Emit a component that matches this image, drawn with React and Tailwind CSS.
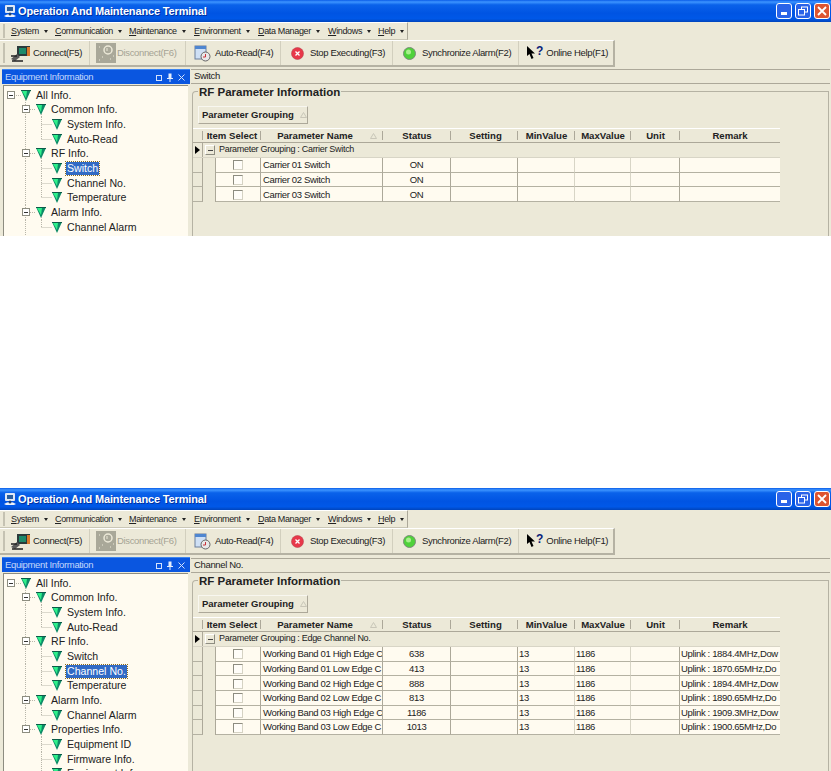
import React from "react";

const MENUS = [
  { first: "S", rest: "ystem", w: "w-[44px]" },
  { first: "C", rest: "ommunication", w: "w-[74px]" },
  { first: "M", rest: "aintenance", w: "w-[65px]" },
  { first: "E", rest: "nvironment", w: "w-[64px]" },
  { first: "D", rest: "ata Manager", w: "w-[70px]" },
  { first: "W", rest: "indows", w: "w-[50px]" },
  { first: "H", rest: "elp", w: "w-[30px]" },
];

const TOOLS = [
  { label: "Connect(F5)", icon: "connect", w: "w-[85px]", gap: "gap-[2px]", pl: "pl-[5px]" },
  { label: "Disconnect(F6)", icon: "disconnect", w: "w-[96px]", gap: "gap-[1px]", pl: "pl-[6px]", off: true },
  { label: "Auto-Read(F4)", icon: "auto", w: "w-[95px]", gap: "gap-[4px]", pl: "pl-[8px]" },
  { label: "Stop Executing(F3)", icon: "stop", w: "w-[112px]", gap: "gap-[6px]", pl: "pl-[10px]" },
  { label: "Synchronize Alarm(F2)", icon: "sync", w: "w-[126px]", gap: "gap-[6px]", pl: "pl-[10px]" },
  { label: "Online Help(F1)", icon: "help", w: "w-[94px]", gap: "gap-[3px]", pl: "pl-[8px]", last: true },
];

const TREE = [
  { level: 0, label: "All Info." },
  { level: 1, label: "Common Info." },
  { level: 2, label: "System Info." },
  { level: 2, label: "Auto-Read", end: true },
  { level: 1, label: "RF Info." },
  { level: 2, label: "Switch" },
  { level: 2, label: "Channel No." },
  { level: 2, label: "Temperature", end: true },
  { level: 1, label: "Alarm Info." },
  { level: 2, label: "Channel Alarm", end: true },
  { level: 1, label: "Properties Info.", last: true },
  { level: 2, label: "Equipment ID", noTrunk: true },
  { level: 2, label: "Firmware Info.", noTrunk: true },
  { level: 2, label: "Equipment Info.", noTrunk: true },
];

const COLS = [
  { title: "Item Select", w: "w-[58px]" },
  { title: "Parameter Name", w: "w-[122px] pr-[14px]", sort: true },
  { title: "Status", w: "w-[68px]" },
  { title: "Setting", w: "w-[67px] pl-[2px]" },
  { title: "MinValue", w: "w-[57px]" },
  { title: "MaxValue", w: "w-[56px]" },
  { title: "Unit", w: "w-[49px]" },
  { title: "Remark", w: "w-[100px]" },
];

const SWITCH_ROWS = [
  ["Carrier 01 Switch", "ON", "", "", ""],
  ["Carrier 02 Switch", "ON", "", "", ""],
  ["Carrier 03 Switch", "ON", "", "", ""],
];

const CHANNEL_ROWS = [
  ["Working Band 01 High Edge C", "638", "13", "1186", "Uplink : 1884.4MHz,Dow"],
  ["Working Band 01 Low Edge C", "413", "13", "1186", "Uplink : 1870.65MHz,Do"],
  ["Working Band 02 High Edge C", "888", "13", "1186", "Uplink : 1894.4MHz,Dow"],
  ["Working Band 02 Low Edge C", "813", "13", "1186", "Uplink : 1890.65MHz,Do"],
  ["Working Band 03 High Edge C", "1186", "13", "1186", "Uplink : 1909.3MHz,Dow"],
  ["Working Band 03 Low Edge C", "1013", "13", "1186", "Uplink : 1900.65MHz,Do"],
];

function ToolIcon({ name }) {
  if (name === "connect") {
    return (
      <svg width="21" height="17" viewBox="0 0 21 17" className="shrink-0">
        <rect x="7" y="1" width="13" height="10" fill="#2b3a3a" />
        <rect x="9" y="3" width="7" height="6" fill="#1d8a6a" />
        <rect x="17" y="2" width="3" height="9" fill="#d9792b" />
        <path d="M1 14 L7 9 L10 12 L5 16 Z" fill="#5a5a5a" />
        <path d="M1 11 H7 M2 16 H13" stroke="#222" strokeWidth="1.5" />
      </svg>
    );
  }
  if (name === "disconnect") {
    return (
      <svg width="20" height="20" viewBox="0 0 20 20" className="shrink-0">
        <rect width="20" height="20" fill="#a9a899" />
        <circle cx="12" cy="7" r="4" fill="none" stroke="#ece9d8" strokeWidth="1.5" />
        <path d="M11 5 V8" stroke="#ece9d8" />
        <path d="M3 4 h1 M6 14 h1 M3 17 h1 M14 16 h1 M17 13 h1" stroke="#ece9d8" />
      </svg>
    );
  }
  if (name === "auto") {
    return (
      <svg width="17" height="17" viewBox="0 0 17 17" className="shrink-0">
        <rect x="1" y="1" width="11" height="13" fill="#cfe0f5" stroke="#6b7f9a" />
        <rect x="1" y="1" width="11" height="3" fill="#4f86d0" />
        <circle cx="11.5" cy="11.5" r="4.5" fill="#e8e8e8" stroke="#666" />
        <path d="M11.5 9 V12 H9" stroke="#c8323a" fill="none" />
      </svg>
    );
  }
  if (name === "stop") {
    return (
      <svg width="13" height="13" viewBox="0 0 13 13" className="shrink-0">
        <circle cx="6.5" cy="6.5" r="6" fill="#e8384a" stroke="#b9434e" strokeWidth="0.6" />
        <path d="M4.5 4.5 L8.5 8.5 M8.5 4.5 L4.5 8.5" stroke="#fff" strokeWidth="1.3" />
      </svg>
    );
  }
  if (name === "sync") {
    return (
      <svg width="13" height="13" viewBox="0 0 13 13" className="shrink-0">
        <circle cx="6.5" cy="6.5" r="6" fill="#4fd13a" stroke="#7d8a7a" />
        <circle cx="5.5" cy="5" r="2.5" fill="#a8f08c" />
      </svg>
    );
  }
  return (
    <span className="flex items-start shrink-0">
      <svg width="9" height="14" viewBox="0 0 9 14" className="shrink-0">
        <path d="M0 0 L0 10 L2.5 8 L4.5 13 L6.5 12 L4.5 7.5 L8 7.5 Z" fill="#000" />
      </svg>
      <span className="text-[12px] leading-[11px] font-bold text-[#0a1f7a]">?</span>
    </span>
  );
}

function Toolbar() {
  return (
    <div className="flex h-[27px] w-[615px] bg-[#ece9d8] border-t border-white border-b-2 border-b-[#b5b2a3] border-r-2 border-r-[#b5b2a3]">
      <div className="w-[3px] shrink-0" />
      <div className="w-[2px] shrink-0 my-[2px] bg-[#c5c2b2]" />
      {TOOLS.map((t) => (
        <div
          key={t.label}
          className={`flex items-center shrink-0 ${t.w} ${t.gap} ${t.pl} ${t.last ? "" : "border-r border-[#d2cfbe]"}`}
        >
          <ToolIcon name={t.icon} />
          <span className={`whitespace-nowrap pt-[1px] text-[9.5px] tracking-[-0.35px] ${t.off ? "text-[#a5a394]" : "text-[#222]"}`}>{t.label}</span>
        </div>
      ))}
    </div>
  );
}

function MenuBar() {
  return (
    <div className="flex items-center h-[18px] w-[408px] border-t border-white border-b border-b-[#c9c6b5] border-r border-r-[#aca899]">
      <div className="w-[3px] shrink-0" />
      <div className="w-[2px] h-[14px] shrink-0 bg-[#c5c2b2]" />
      <div className="w-[6px] shrink-0" />
      {MENUS.map((m) => (
        <div key={m.first} className={`flex items-center shrink-0 pt-[1px] ${m.w} text-[9px] tracking-[-0.35px] text-[#222]`}>
          <span className="whitespace-nowrap">
            <span className="underline">{m.first}</span>
            {m.rest}
          </span>
          <span className="ml-[5px] w-0 h-0 border-x-[2.5px] border-x-transparent border-t-[3px] border-t-[#222]" />
        </div>
      ))}
    </div>
  );
}

function TitleBar() {
  return (
    <div className="flex items-center h-[22px] pl-[3px] pr-[1px] bg-[linear-gradient(180deg,#0a5ce8_0%,#3d95ff_9%,#0a62ea_22%,#0054e3_60%,#0058e8_85%,#0044bb_100%)]">
      <svg width="14" height="14" viewBox="0 0 14 14" className="shrink-0">
        <rect x="2" y="1" width="10" height="8" rx="1" fill="#dfe8f5" />
        <rect x="4" y="3" width="6" height="4" fill="#2a5f9e" />
        <path d="M1 12 Q7 8 13 12 L11 13 H3 Z" fill="#eef2f8" />
        <circle cx="7" cy="10" r="1.5" fill="#1d3f70" />
      </svg>
      <span className="ml-[1px] text-[11px] tracking-[-0.15px] font-bold text-white whitespace-nowrap [text-shadow:1px_1px_0_#0030a0]">
        Operation And Maintenance Terminal
      </span>
      <div className="ml-auto flex gap-[3px]">
        <div className="flex items-end pl-[4px] pb-[3px] w-[16px] h-[16px] rounded-[3px] border border-white bg-[#2a63e8]">
          <div className="w-[6px] h-[3px] bg-white" />
        </div>
        <div className="flex items-center justify-center w-[16px] h-[16px] rounded-[3px] border border-white bg-[#2a63e8]">
          <svg width="10" height="10" viewBox="0 0 10 10">
            <rect x="3.5" y="1" width="6" height="5" fill="none" stroke="#fff" />
            <rect x="0.5" y="3.5" width="6" height="5.5" fill="#2a63e8" stroke="#fff" />
          </svg>
        </div>
        <div className="flex items-center justify-center w-[16px] h-[16px] rounded-[3px] border border-white bg-[#dd5430]">
          <svg width="10" height="10" viewBox="0 0 10 10">
            <path d="M1 1 L9 9 M9 1 L1 9" stroke="#fff" strokeWidth="1.8" />
          </svg>
        </div>
      </div>
    </div>
  );
}

function Funnel({ x }) {
  return (
    <g>
      <polygon points={`${x},2 ${x + 10},2 ${x + 5},13`} fill="#0c8a66" />
      <polygon points={`${x + 1},3 ${x + 6},3 ${x + 5},10`} fill="#2ef08a" />
      <path d={`M${x} 2.5 H${x + 10}`} stroke="#0a5c48" />
    </g>
  );
}

function Expander({ x }) {
  return (
    <g>
      <rect x={x + 0.5} y="3.5" width="7" height="7" fill="#fff" stroke="#8d8d80" />
      <path d={`M${x + 2} 7.5 H${x + 6}`} stroke="#333" />
    </g>
  );
}

function TreeRow({ node, selected }) {
  const dots = { stroke: "#b8b6aa", strokeDasharray: "1 1" };
  const width = node.level === 0 ? 32 : node.level === 1 ? 47 : 63;
  return (
    <div className="flex items-center h-[14.67px]">
      <svg width={width} height="15" viewBox={`4 0 ${width} 15`} className="shrink-0">
        {node.level === 0 && (
          <g>
            <path d="M14 7.5 H21" {...dots} />
            <Expander x={7} />
            <Funnel x={21} />
            <path d="M25.5 12 V15" {...dots} />
          </g>
        )}
        {node.level === 1 && (
          <g>
            <path d={node.last ? "M25.5 0 V7.5" : "M25.5 0 V15"} {...dots} />
            <path d="M30 7.5 H36" {...dots} />
            <Expander x={22} />
            <Funnel x={36} />
            <path d="M41.5 12 V15" {...dots} />
          </g>
        )}
        {node.level === 2 && (
          <g>
            {!node.noTrunk && <path d="M25.5 0 V15" {...dots} />}
            <path d={node.end ? "M41.5 0 V7.5" : "M41.5 0 V15"} {...dots} />
            <path d="M41.5 7.5 H52" {...dots} />
            <Funnel x={52} />
          </g>
        )}
      </svg>
      <span
        className={`whitespace-nowrap text-[10.6px] leading-[13px] ${
          selected
            ? "bg-[#316ac5] text-white outline-1 outline-dotted outline-[#8a6a20] px-[1px] -ml-[1px]"
            : "text-[#222]"
        }`}
      >
        {node.label}
      </span>
    </div>
  );
}

function TreePanel({ selected, count }) {
  return (
    <div className="flex flex-col w-[190px] shrink-0">
      <div className="flex items-center h-[15px] ml-[2px] pl-[3px] pr-[5px] bg-[#0a56e0] border-t border-[#3d85f0]">
        <span className="text-[9.5px] tracking-[-0.35px] text-[#c4d8fb] whitespace-nowrap">Equipment Information</span>
        <div className="ml-auto flex items-center gap-[5px]">
          <svg width="6" height="7" viewBox="0 0 6 7"><rect x="0.5" y="1.5" width="5" height="5" fill="none" stroke="#d5e2fb" /></svg>
          <svg width="6" height="9" viewBox="0 0 6 9"><path d="M1.5 0.5 H4.5 V5 H6 V6 H3.5 V9 H2.5 V6 H0 V5 H1.5 Z" fill="#e6eefc" /></svg>
          <svg width="7" height="7" viewBox="0 0 7 7"><path d="M0.5 0.5 L6.5 6.5 M6.5 0.5 L0.5 6.5" stroke="#d5e2fb" /></svg>
        </div>
      </div>
      <div className="flex-1 ml-[3px] mr-[2px] mt-[1px] pt-[2px] bg-[#fffbf0] border-l border-t border-[#8d8c80] overflow-hidden">
        {TREE.slice(0, count).map((n) => (
          <TreeRow key={n.label} node={n} selected={n.label === selected} />
        ))}
      </div>
    </div>
  );
}

function GridHeader() {
  return (
    <div className="flex h-[15px] bg-[#ece9d8] border-t border-white border-b-[1.5px] border-b-[#aca899]">
      <div className="w-[10px] shrink-0 flex justify-end py-[2px]"><div className="w-px bg-[#aca899]" /></div>
      {COLS.map((c, i) => (
        <div
          key={c.title}
          className={`flex items-center justify-center shrink-0 relative pt-[1px] ${c.w} text-[9.6px] font-bold text-[#222] whitespace-nowrap`}
        >
          {c.title}
          {c.sort && (
            <svg width="7" height="6" viewBox="0 0 7 6" className="absolute right-[6px] top-[4px]">
              <path d="M3.5 0.5 L6.5 5.5 H0.5 Z" fill="none" stroke="#c9c6b8" />
            </svg>
          )}
          {i < COLS.length - 1 && <div className="absolute right-0 top-[2px] bottom-[2px] w-px bg-[#aca899]" />}
        </div>
      ))}
    </div>
  );
}

function GridRow({ row }) {
  const [name, status, min, max, remark] = row;
  const line = "border-b border-b-[#b4b1a2] h-[14.67px] pt-[1px] flex items-center shrink-0 overflow-hidden whitespace-nowrap text-[9.5px] tracking-[-0.35px] text-[#222]";
  return (
    <div className="flex">
      <div className={`${line} w-[10px] border-r border-r-[#aca899]`} />
      <div className="w-[13px] h-[14.67px] shrink-0 border-r border-r-[#aca899]" />
      <div className={`${line} w-[45px] justify-center bg-[#fffbf0] border-r border-r-[#aca899]`}>
        <div className="w-[10px] h-[10px] bg-[#fffdf8] border border-[#8d8c80] border-b-[#d5d2c3] border-r-[#d5d2c3]" />
      </div>
      <div className={`${line} w-[122px] pl-[2px] bg-[#fffbf0] border-r border-r-[#aca899]`}>{name}</div>
      <div className={`${line} w-[68px] justify-center bg-[#fffbf0] border-r border-r-[#aca899]`}>{status}</div>
      <div className={`${line} w-[67px] bg-[#fffbf0] border-r border-r-[#aca899]`} />
      <div className={`${line} w-[57px] pl-[1px] bg-[#fffbf0] border-r border-r-[#d8d5c6]`}>{min}</div>
      <div className={`${line} w-[56px] pl-[1px] bg-[#fffbf0] border-r border-r-[#d8d5c6]`}>{max}</div>
      <div className={`${line} w-[49px] bg-[#fffbf0] border-r border-r-[#aca899]`} />
      <div className={`${line} w-[100px] pl-[1px] bg-[#fffbf0]`}>{remark}</div>
    </div>
  );
}

function ParamPane({ crumb, group, rows, shift }) {
  return (
    <div className={`flex flex-col flex-1 min-w-0 pl-[1px] ${shift}`}>
      <div className="flex items-center h-[15px] pl-[3px] border-y border-[#aca899] text-[9.5px] tracking-[-0.35px] text-[#222]">{crumb}</div>
      <div className="relative flex-1 mt-[7px] ml-[1px] mr-[1px] border-l border-t border-r border-[#b5b2a3] rounded-tl-[4px]">
        <div className="absolute left-[5px] -top-[7px] px-[1px] bg-[#ece9d8] text-[11.5px] leading-[14px] font-bold text-[#222] whitespace-nowrap">
          RF Parameter Information
        </div>
        <div className="flex items-center w-[110px] h-[18px] mt-[14px] ml-[5px] pl-[3px] border border-[#f8f7f0] border-r-[#aca899] border-b-[#aca899] text-[9.5px] font-bold text-[#222] whitespace-nowrap">
          Parameter Grouping
          <svg width="7" height="6" viewBox="0 0 7 6" className="ml-[6px] shrink-0">
            <path d="M3.5 0.5 L6.5 5.5 H0.5 Z" fill="none" stroke="#c9c6b8" />
          </svg>
        </div>
        <div className="w-[587px] mt-[4px]">
          <GridHeader />
          <div className="flex items-center h-[15px] border-b border-b-[#d8d5c6]">
            <div className="flex items-center justify-center w-[10px] h-full shrink-0 border-r border-r-[#aca899]">
              <div className="w-0 h-0 border-y-[4px] border-y-transparent border-l-[5px] border-l-black" />
            </div>
            <div className="flex items-center justify-center w-[10px] h-[10px] ml-[2px] shrink-0 border border-white border-r-[#8d8c80] border-b-[#8d8c80]">
              <div className="w-[5px] h-px bg-[#444]" />
            </div>
            <span className="ml-[4px] text-[9px] tracking-[-0.3px] text-[#222] whitespace-nowrap">{group}</span>
          </div>
          {rows.map((r) => (
            <GridRow key={r[0]} row={r} />
          ))}
        </div>
      </div>
    </div>
  );
}

function TerminalWindow({ height, crumb, group, rows, count, shift }) {
  return (
    <div className={`flex flex-col shrink-0 overflow-hidden bg-[#ece9d8] font-['Liberation_Sans',sans-serif] ${height}`}>
      <TitleBar />
      <MenuBar />
      <Toolbar />
      <div className="flex flex-1 min-h-0 mt-[2px] mr-[1px]">
        <TreePanel selected={crumb} count={count} />
        <ParamPane crumb={crumb} group={group} rows={rows} shift={shift} />
      </div>
    </div>
  );
}

export default function App() {
  return (
    <div className="flex flex-col h-[771px] w-[831px] overflow-hidden bg-white">
      <TerminalWindow
        height="h-[236px]"
        crumb="Switch"
        group="Parameter Grouping : Carrier Switch"
        rows={SWITCH_ROWS}
        count={10}
        shift=""
      />
      <div className="h-[252px] shrink-0" />
      <TerminalWindow
        height="h-[283px]"
        crumb="Channel No."
        group="Parameter Grouping : Edge Channel No."
        rows={CHANNEL_ROWS}
        count={14}
        shift="pt-[1px]"
      />
    </div>
  );
}
